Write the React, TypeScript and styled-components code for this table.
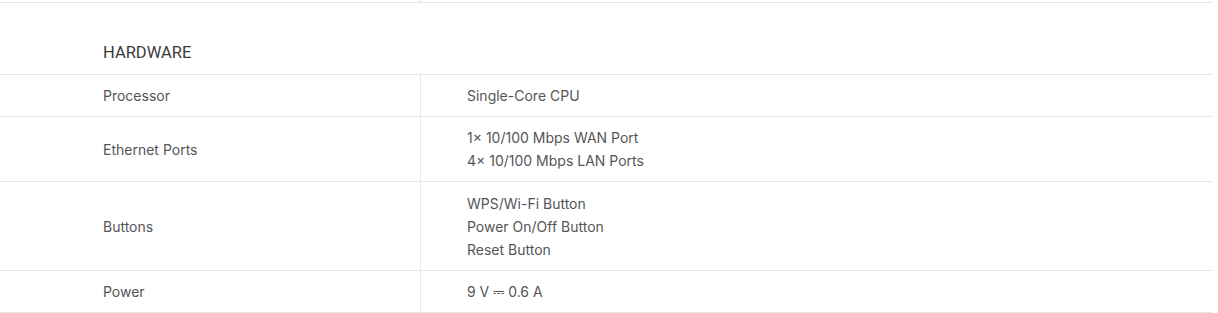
import React from "react";
import styled, { createGlobalStyle } from "styled-components";

const GlobalStyle = createGlobalStyle`
  html, body {
    margin: 0;
    padding: 0;
    background: #ffffff;
  }
  body {
    font-family: Inter, "Noto Sans", Roboto, Arial, sans-serif;
    -webkit-font-smoothing: antialiased;
  }
`;

const Specs = styled.div`
  width: 1212px;
  display: flex;
  flex-direction: column;
`;

const Row = styled.div<{ $stub?: boolean }>`
  display: grid;
  grid-template-columns: 421px 1fr;
  border-bottom: 1px solid #e6e6ec;
  height: ${(p) => (p.$stub ? "2px" : "auto")};
  box-sizing: ${(p) => (p.$stub ? "content-box" : "border-box")};
`;

const Label = styled.div`
  display: flex;
  align-items: center;
  padding: 9px 0 9px 103px;
  border-right: 1px solid #e6e6ec;
  font-size: 14px;
  line-height: 23px;
  color: #555558;
`;

const Value = styled.div<{ $lines: number }>`
  display: flex;
  flex-direction: column;
  justify-content: center;
  padding: ${(p) => (p.$lines > 2 ? "9.5px" : "9px")} 0 ${(p) => (p.$lines > 2 ? "9.5px" : "9px")} 46px;
  font-size: 14px;
  line-height: 23px;
  color: #555558;
`;

const SectionHeading = styled.h3`
  margin: 0;
  padding: 38px 0 9px 103px;
  border-bottom: 1px solid #e6e6ec;
  font-family: Roboto, Inter, Arial, sans-serif;
  font-size: 16.5px;
  font-weight: 400;
  line-height: 24px;
  color: #3a3a40;
`;

const StubCell = styled.div<{ $divider?: boolean }>`
  border-right: ${(p) => (p.$divider ? "1px solid #e6e6ec" : "none")};
`;

const hardware: { label: string; values: string[] }[] = [
  { label: "Processor", values: ["Single-Core CPU"] },
  {
    label: "Ethernet Ports",
    values: ["1× 10/100 Mbps WAN Port", "4× 10/100 Mbps LAN Ports"],
  },
  {
    label: "Buttons",
    values: ["WPS/Wi-Fi Button", "Power On/Off Button", "Reset Button"],
  },
  { label: "Power", values: ["9 V ⎓ 0.6 A"] },
];

export default function App() {
  return (
    <>
      <GlobalStyle />
      <Specs>
        <Row $stub>
          <StubCell $divider />
          <StubCell />
        </Row>
        <SectionHeading>HARDWARE</SectionHeading>
        {hardware.map((item) => (
          <Row key={item.label}>
            <Label>{item.label}</Label>
            <Value $lines={item.values.length}>
              {item.values.map((v) => (
                <span key={v}>{v}</span>
              ))}
            </Value>
          </Row>
        ))}
      </Specs>
    </>
  );
}
